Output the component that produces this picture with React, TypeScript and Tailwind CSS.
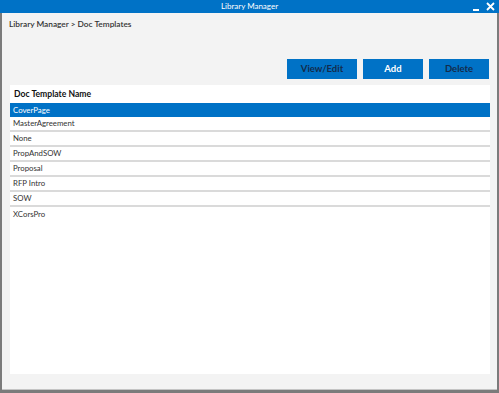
import React from 'react';

const templates = [
  'CoverPage',
  'MasterAgreement',
  'None',
  'PropAndSOW',
  'Proposal',
  'RFP Intro',
  'SOW',
  'XCorsPro',
];

export default function App(): React.ReactNode {
  const selected = 'CoverPage';

  return (
    <div className="w-[499px] h-[393px] flex flex-col bg-[#7b7b7b] font-['Lato','Liberation_Sans',sans-serif] overflow-hidden">
      {/* title bar */}
      <div className="h-[13px] shrink-0 bg-[#0072c6] flex items-center relative">
        <div className="flex-1 text-center text-white text-[8px] leading-[13px]">Library Manager</div>
        <div className="absolute right-[4px] top-0 h-[13px] flex items-center gap-[7px]">
          <svg width="6" height="10" viewBox="0 0 6 10">
            <rect x="0" y="7" width="6" height="2" fill="#fff" />
          </svg>
          <svg width="9" height="9" viewBox="0 0 9 9">
            <path d="M1 1 L8 8 M8 1 L1 8" stroke="#fff" strokeWidth="1.8" />
          </svg>
        </div>
      </div>

      <div className="flex-1 flex flex-col mx-[2px] mb-[3px] bg-[#f3f3f3] border-b border-[#c4c4c4]">
        <div className="pl-[7px] pt-[5px] h-[46px] text-[8.3px] font-semibold text-[#333]">
          Library Manager &gt; Doc Templates
        </div>

        <div className="flex justify-end gap-[6px] pr-[8px]">
          <button className="w-[70px] h-[20px] bg-[#0072c6] text-[#132c4c] text-[9.5px] font-bold">View/Edit</button>
          <button className="w-[60px] h-[20px] bg-[#0072c6] text-white text-[9.5px] font-bold">Add</button>
          <button className="w-[60px] h-[20px] bg-[#0072c6] text-[#132c4c] text-[9.5px] font-bold">Delete</button>
        </div>

        <div className="mt-[6px] mx-[8px] mr-[7px] h-[289px] bg-white flex flex-col">
          <div className="h-[18px] shrink-0 pl-[4px] flex items-center text-[8.6px] font-bold text-[#111]">
            Doc Template Name
          </div>
          {templates.map((name, i) => {
            const isSel = name === selected;
            const last = i === templates.length - 1;
            return (
              <div
                key={name}
                className={
                  isSel
                    ? 'h-[14px] shrink-0 pl-[3px] pt-[1px] flex items-center text-[7.8px] bg-[#0072c6] text-white'
                    : last
                    ? 'h-[15px] shrink-0 pl-[3px] pt-[1px] flex items-center text-[7.8px] text-[#333]'
                    : 'h-[15px] shrink-0 pl-[3px] pt-[1px] flex items-center text-[7.8px] text-[#333] border-b-2 border-[#dadada]'
                }
              >
                {name}
              </div>
            );
          })}
        </div>
      </div>
    </div>
  );
}
